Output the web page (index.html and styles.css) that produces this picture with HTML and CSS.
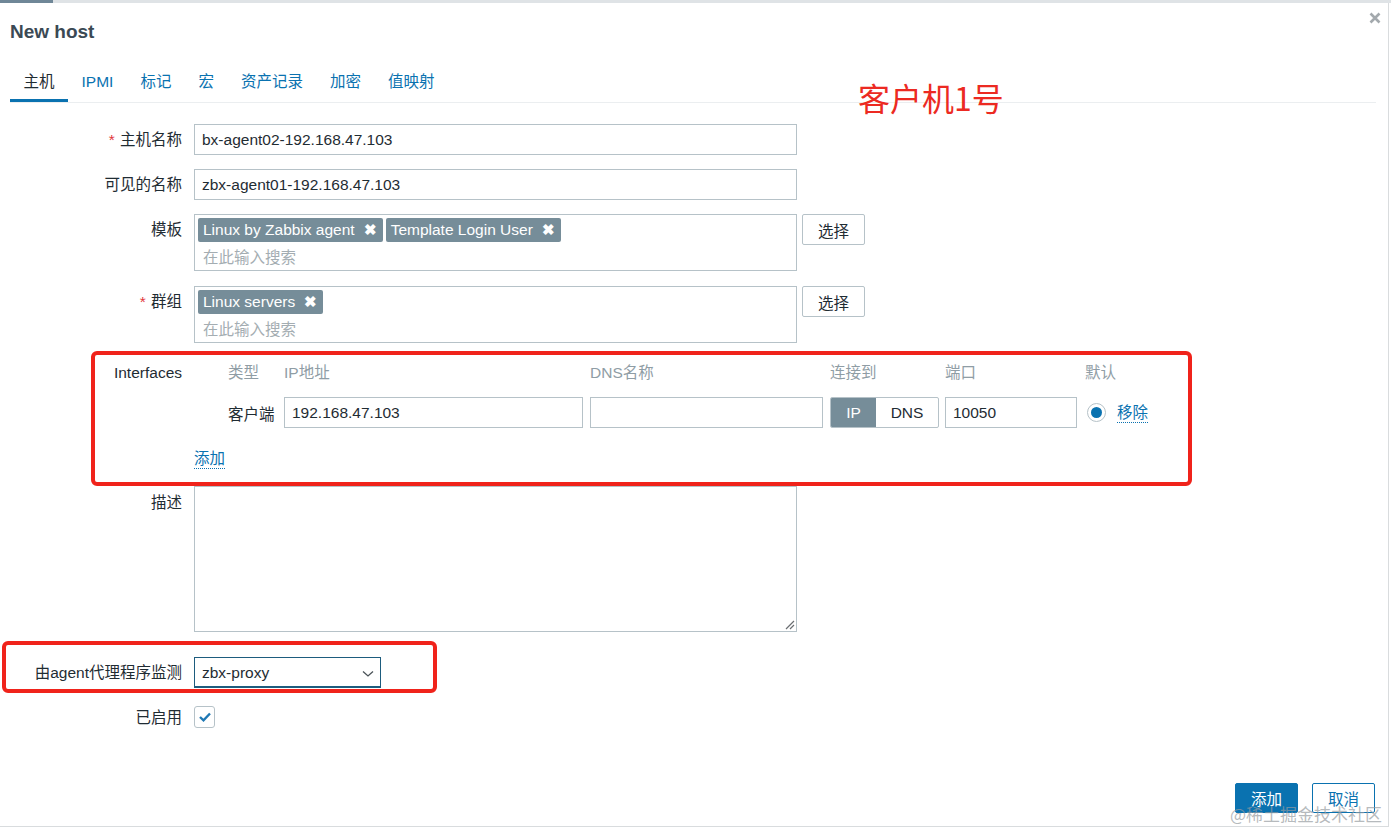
FILE: index.html
```html
<!DOCTYPE html>
<html lang="zh">
<head>
<meta charset="utf-8">
<title>New host</title>
<link rel="stylesheet" href="styles.css">
</head>
<body>
<div class="topstrip"><div class="topstrip-active"></div></div>
<div class="dialog">
  <div class="dialog-head">
    <h2 class="dialog-title">New host</h2>
    <button class="close" aria-label="close">
      <svg width="12" height="12" viewBox="0 0 12 12"><path d="M1.5 1.5 L10.5 10.5 M10.5 1.5 L1.5 10.5" stroke="#a3a9ad" stroke-width="2.6" stroke-linecap="butt"/></svg>
    </button>
  </div>

  <ul class="tabs">
    <li class="tab active">主机</li>
    <li class="tab">IPMI</li>
    <li class="tab">标记</li>
    <li class="tab">宏</li>
    <li class="tab">资产记录</li>
    <li class="tab">加密</li>
    <li class="tab">值映射</li>
  </ul>

  <div class="form">
    <div class="row r-host">
      <label class="lbl"><span class="req">*</span> 主机名称</label>
      <div class="field"><div class="input w-full">bx-agent02-192.168.47.103</div></div>
    </div>
    <div class="row r-visible">
      <label class="lbl">可见的名称</label>
      <div class="field"><div class="input w-full">zbx-agent01-192.168.47.103</div></div>
    </div>
    <div class="row r-tpl">
      <label class="lbl">模板</label>
      <div class="field with-btn">
        <div class="multi">
          <div class="chips">
            <span class="chip">Linux by Zabbix agent<span class="chip-x">✖</span></span>
            <span class="chip">Template Login User<span class="chip-x">✖</span></span>
          </div>
          <div class="ph">在此输入搜索</div>
        </div>
        <button class="btn-sel">选择</button>
      </div>
    </div>
    <div class="row r-grp">
      <label class="lbl"><span class="req">*</span> 群组</label>
      <div class="field with-btn">
        <div class="multi">
          <div class="chips">
            <span class="chip">Linux servers<span class="chip-x">✖</span></span>
          </div>
          <div class="ph">在此输入搜索</div>
        </div>
        <button class="btn-sel">选择</button>
      </div>
    </div>
    <div class="row r-if">
      <label class="lbl lbl-if">Interfaces</label>
      <div class="field">
        <div class="iface">
          <div class="ih">类型</div>
          <div class="ih">IP地址</div>
          <div class="ih">DNS名称</div>
          <div class="ih">连接到</div>
          <div class="ih">端口</div>
          <div class="ih">默认</div>

          <div class="itype">客户端</div>
          <div><div class="input w-ip">192.168.47.103</div></div>
          <div><div class="input w-dns"></div></div>
          <div class="toggle"><span class="tg on">IP</span><span class="tg">DNS</span></div>
          <div><div class="input w-port">10050</div></div>
          <div class="idef"><span class="radio"><span class="radio-dot"></span></span><a class="link">移除</a></div>
        </div>
        <a class="link add-link">添加</a>
      </div>
    </div>
    <div class="row r-desc">
      <label class="lbl lbl-desc">描述</label>
      <div class="field">
        <div class="textarea">
          <svg class="grip" width="12" height="12" viewBox="0 0 12 12"><path d="M11 3 L3 11 M11 7 L7 11" stroke="#6b6f72" stroke-width="1.2"/></svg>
        </div>
      </div>
    </div>
    <div class="row r-proxy">
      <label class="lbl">由agent代理程序监测</label>
      <div class="field">
        <div class="select">zbx-proxy
          <svg class="chev" width="12" height="8" viewBox="0 0 12 8"><path d="M1 1.5 L6 6 L11 1.5" fill="none" stroke="#4b5358" stroke-width="1.3"/></svg>
        </div>
      </div>
    </div>
    <div class="row r-en">
      <label class="lbl">已启用</label>
      <div class="field">
        <span class="checkbox"><svg width="14" height="12" viewBox="0 0 14 12"><path d="M2 6 L5.5 9.3 L12 2.5" fill="none" stroke="#1f78b4" stroke-width="2.4"/></svg></span>
      </div>
    </div>
  </div>

  <div class="footer">
    <button class="btn-primary">添加</button>
    <button class="btn-alt">取消</button>
  </div>

  <div class="note note-if"></div>
  <div class="note note-proxy"></div>
  <div class="note-text">客户机1号</div>
  <div class="watermark">@稀土掘金技术社区</div>
</div>
</body>
</html>
```

FILE: styles.css
```css
* { box-sizing: border-box; }
html, body { margin: 0; padding: 0; }
body {
  width: 1391px;
  height: 827px;
  background: #ffffff;
  font-family: "Liberation Sans", Arial, "Noto Sans CJK SC", sans-serif;
  font-size: 15px;
  color: #1f2c33;
  overflow: hidden;
}

.topstrip {
  height: 3px;
  background: #dfe3e6;
}
.topstrip-active {
  width: 53px;
  height: 3px;
  background: #6f8797;
}

.dialog {
  position: relative;
  width: 1389px;
  height: 824px;
  border-right: 1px solid #d9dcde;
  border-bottom: 1px solid #d9dcde;
  padding: 0 12px 0 10px;
  display: flex;
  flex-direction: column;
}

.dialog-head {
  display: flex;
  justify-content: space-between;
  align-items: flex-start;
  height: 40px;
}
.dialog-title {
  margin: 18px 0 0 0;
  font-size: 19px;
  line-height: 22px;
  font-weight: bold;
  color: #3b4954;
}
.close {
  margin: 8px -6px 0 0;
  padding: 0;
  border: 0;
  background: transparent;
  width: 14px;
  height: 14px;
  display: flex;
  align-items: center;
  justify-content: center;
}

.tabs {
  list-style: none;
  margin: 21px 0 0 0;
  padding: 0;
  display: flex;
  border-bottom: 1px solid #ebeef0;
}
.tab {
  padding: 8px 13.5px 7px;
  line-height: 20px;
  border-bottom: 3px solid transparent;
  color: #0a72b0;
  font-size: 15.5px;
}
.tab.active {
  color: #1f2c33;
  border-bottom-color: #0a72b0;
}

.form {
  display: flex;
  flex-direction: column;
  margin-top: 21px;
  margin-left: -10px;
}
.row {
  display: grid;
  grid-template-columns: 182px 1fr;
  column-gap: 12px;
  align-items: start;
}
.lbl {
  text-align: right;
  line-height: 31px;
  white-space: nowrap;
  font-size: 15.5px;
}
.req { color: #e2373a; margin-right: 1px; }

.r-visible { margin-top: 14px; }
.r-tpl { margin-top: 14px; }
.r-grp { margin-top: 15px; }
.r-if { margin-top: 20px; }
.r-desc { margin-top: 17px; }
.r-proxy { margin-top: 25px; }
.r-en { margin-top: 18px; }

.field { display: flex; flex-direction: column; }
.field.with-btn { flex-direction: row; gap: 5px; align-items: flex-start; }

.input {
  height: 31px;
  border: 1px solid #b6c2c8;
  background: #fff;
  padding: 0 7px;
  line-height: 29px;
  font-size: 15.5px;
  color: #1f2c33;
  white-space: nowrap;
}
.w-full { width: 603px; }
.w-ip { width: 299px; }
.w-dns { width: 233px; }
.w-port { width: 132px; }

.multi {
  width: 603px;
  height: 57px;
  border: 1px solid #b6c2c8;
  padding: 3px 3px 0 3px;
}
.chips { display: flex; gap: 3px; }
.chip {
  display: inline-flex;
  align-items: center;
  height: 24px;
  padding: 0 6px 0 5px;
  background: #768d99;
  color: #fff;
  border-radius: 2px;
  font-size: 15.5px;
  line-height: 24px;
}
.chip-x {
  margin-left: 9px;
  font-size: 15px;
  font-weight: bold;
}
.ph {
  color: #a4adb2;
  line-height: 24px;
  padding-left: 5px;
  margin-top: 4px;
  font-size: 15.5px;
}
.btn-sel {
  width: 63px;
  height: 31px;
  border: 1px solid #b6c2c8;
  border-radius: 2px;
  background: #fff;
  font-family: inherit;
  font-size: 15.5px;
  color: #1f2c33;
  padding: 0;
}

.lbl-if { line-height: 20px; }
.iface {
  margin-left: 34px;
  display: grid;
  grid-template-columns: 56px 306px 240px 115px 140px 110px;
  grid-template-rows: 20px 31px;
  row-gap: 14px;
  align-items: center;
}
.ih {
  color: #8f9da5;
  line-height: 20px;
  font-size: 15.5px;
}
.itype { font-size: 15.5px; }
.toggle {
  display: flex;
  width: 109px;
  height: 31px;
  border: 1px solid #b6c2c8;
  border-radius: 2px;
  overflow: hidden;
}
.tg {
  flex: 1 1 auto;
  display: flex;
  align-items: center;
  justify-content: center;
  font-size: 15.5px;
  color: #1f2c33;
}
.tg.on {
  flex: 0 0 45px;
  background: #768d99;
  color: #fff;
}
.idef {
  display: flex;
  align-items: center;
  padding-left: 2px;
}
.radio {
  width: 19px;
  height: 19px;
  border: 1px solid #b6c2c8;
  border-radius: 50%;
  display: flex;
  align-items: center;
  justify-content: center;
}
.radio-dot {
  width: 11px;
  height: 11px;
  border-radius: 50%;
  background: #0a72b0;
}
.link {
  color: #0a72b0;
  border-bottom: 1px dotted #0a72b0;
  font-size: 15.5px;
  line-height: 19px;
}
.idef .link { margin-left: 11px; }
.add-link {
  align-self: flex-start;
  margin-top: 21px;
}

.lbl-desc { line-height: 34px; }
.textarea {
  position: relative;
  width: 603px;
  height: 146px;
  border: 1px solid #b6c2c8;
}
.grip { position: absolute; right: 1px; bottom: 1px; }

.select {
  position: relative;
  width: 187px;
  height: 31px;
  border: 1px solid #1d5c7e;
  border-bottom-width: 2px;
  padding: 0 7px;
  line-height: 29px;
  font-size: 15.5px;
}
.chev { position: absolute; right: 6px; top: 12px; }

.checkbox {
  width: 21px;
  height: 22px;
  border: 1px solid #b6c2c8;
  border-radius: 3px;
  display: flex;
  align-items: center;
  justify-content: center;
}
.r-en .lbl { line-height: 24px; }

.footer {
  margin-top: auto;
  display: flex;
  justify-content: flex-end;
  gap: 14px;
  padding-bottom: 13px;
  margin-right: 1px;
}
.btn-primary, .btn-alt {
  width: 63px;
  height: 30px;
  border-radius: 2px;
  font-family: inherit;
  font-size: 15.5px;
  padding: 0;
}
.btn-primary {
  background: #0a72b0;
  border: 1px solid #0a72b0;
  color: #fff;
}
.btn-alt {
  background: #fff;
  border: 1px solid #0a72b0;
  color: #0a72b0;
}

.note {
  position: absolute;
  border: 4px solid #f0231b;
  border-radius: 6px;
}
.note-if { left: 91px; top: 348px; width: 1101px; height: 135px; }
.note-proxy { left: 2px; top: 638px; width: 435px; height: 52px; }
.note-text {
  position: absolute;
  left: 858px;
  top: 74px;
  font-size: 32px;
  line-height: 40px;
  color: #ec2a22;
  font-family: "Noto Sans CJK SC", sans-serif;
}
.watermark {
  position: absolute;
  right: 6px;
  bottom: 1px;
  font-size: 17px;
  color: rgba(150, 155, 160, 0.7);
  font-family: "Noto Sans CJK SC", sans-serif;
  line-height: 22px;
}
```
